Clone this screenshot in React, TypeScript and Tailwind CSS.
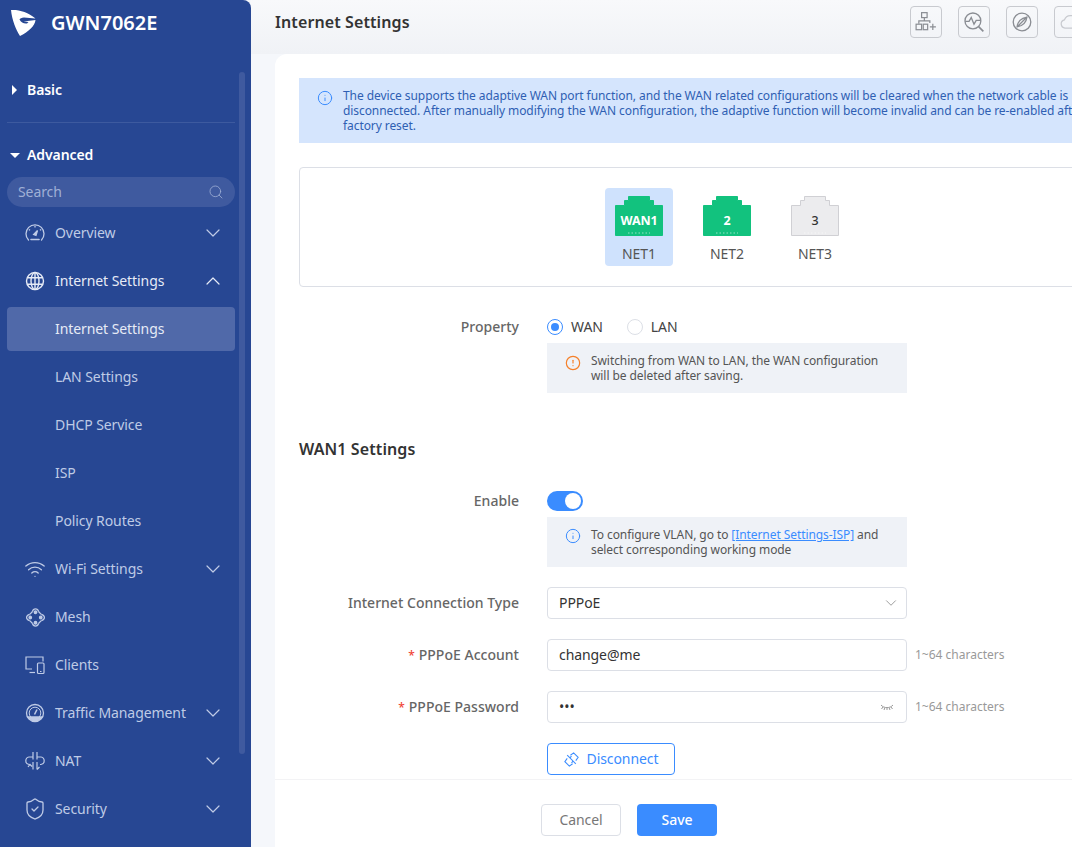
import type { ReactNode } from 'react';
import { ChevronDown, ChevronUp, Info, Search, ShieldCheck, Wifi, CircleAlert } from 'lucide-react';

function Logo() {
  return (
    <svg width="28" height="28" viewBox="0 0 28 28" className="shrink-0">
      <path d="M1 1 C9 0.5 18 3 25.5 9.5 L14 8.5 C11.5 8.5 10 9.5 9.5 10.5 C11 13.5 14 15 17 14.5 L18.5 13 L13.5 12.5 L25.5 11 C25 17 18 23 10 27 C6 21 2 11 1 1 Z" fill="#fff" />
    </svg>
  );
}

function OverviewIcon() {
  return (
    <svg width="20" height="20" viewBox="0 0 20 20" fill="none" stroke="currentColor" strokeWidth="1.3" className="shrink-0">
      <path d="M3.5 17 A9 9 0 1 1 16.5 17" strokeLinecap="round" />
      <path d="M10 3 v1.5 M3.8 6.5 l1.3 .8 M16.2 6.5 l-1.3 .8" />
      <path d="M8.7 11.5 L12.5 7.5 L11 12.3 Z" fill="currentColor" />
      <path d="M6 16.5 h8" strokeWidth="1.6" strokeLinecap="round" />
    </svg>
  );
}

function GlobeIcon() {
  return (
    <svg width="20" height="20" viewBox="0 0 20 20" fill="none" stroke="currentColor" strokeWidth="1.4" className="shrink-0">
      <circle cx="10" cy="10" r="8.5" />
      <ellipse cx="10" cy="10" rx="4" ry="8.5" />
      <path d="M10 1.5 V18.5 M2.2 6.8 H17.8 M2.2 13.2 H17.8" />
    </svg>
  );
}

function MeshIcon() {
  return (
    <svg width="21" height="21" viewBox="0 0 20 20" fill="none" stroke="currentColor" strokeWidth="1.2" className="shrink-0">
      <path d="M7 4.5 C8 1 12 1 13 4.5 M15.5 7 C19.5 8 19.5 12 15.5 13 M13 15.5 C12 19 8 19 7 15.5 M4.5 13 C.5 12 .5 8 4.5 7" />
      <path d="M7 4.5 L4.5 7 M13 4.5 L15.5 7 M15.5 13 L13 15.5 M7 15.5 L4.5 13" />
      <circle cx="10" cy="5" r="1.2" fill="currentColor" />
      <circle cx="15" cy="10" r="1.2" fill="currentColor" />
      <circle cx="10" cy="15" r="1.2" fill="currentColor" />
      <circle cx="5" cy="10" r="1.2" fill="currentColor" />
    </svg>
  );
}

function ClientsIcon() {
  return (
    <svg width="20" height="20" viewBox="0 0 20 20" fill="none" stroke="currentColor" strokeWidth="1.2" className="shrink-0">
      <path d="M7 14 H1 V2 H18 V6.5" />
      <path d="M4.5 17.5 H10" />
      <rect x="12.5" y="8" width="6.5" height="10.5" rx="1" />
      <path d="M15 16.5 h1.5" />
    </svg>
  );
}

function TrafficIcon() {
  return (
    <svg width="20" height="20" viewBox="0 0 20 20" fill="none" stroke="currentColor" strokeWidth="1.3" className="shrink-0">
      <circle cx="10" cy="10" r="8.5" />
      <circle cx="10" cy="10" r="5.8" strokeWidth="1" />
      <path d="M3 14 H17 A8.5 8.5 0 0 1 3 14 Z" fill="currentColor" />
      <path d="M9.5 11.5 L12 6.5" strokeWidth="1.5" />
    </svg>
  );
}

function NatIcon() {
  return (
    <svg width="20" height="20" viewBox="0 0 20 20" fill="none" stroke="currentColor" strokeWidth="1.2" className="shrink-0">
      <path d="M8 6 H4 A3.8 3.8 0 0 0 4 13.5 H5" />
      <path d="M12 6 H16 A3.8 3.8 0 0 1 16 13.5 H15" />
      <path d="M8 1 V8.5 M12 1 V8.5" />
      <path d="M8 11 V18.5 M12 11 V18.5 M12 18.5 L14.5 16 M3 16 L5 13.5 L7 15.5" />
    </svg>
  );
}

function Port({ label, name, color, edge, textColor, weight, selected }: { label: string; name: string; color: string; edge: string; textColor: string; weight: number; selected?: boolean }) {
  return (
    <div className={`flex h-[78px] w-[68px] flex-col items-center rounded pt-2 ${selected ? 'bg-[#cfe2fd]' : ''}`}>
      <svg width="48" height="40" viewBox="0 0 48 40">
        <path d="M.5 9.5 H9.5 V4.5 H13.5 V.5 H34.5 V4.5 H38.5 V9.5 H47.5 V39.5 H.5 Z" fill={color} stroke={edge} />
        <path d="M13 37 H35" stroke="#fff" strokeOpacity="0.55" strokeDasharray="1.5 2" />
        <text x="24" y="29" textAnchor="middle" fontSize="12.5" fontWeight={weight} fill={textColor} fontFamily="'Noto Sans', sans-serif">{label}</text>
      </svg>
      <span className="mt-2 text-sm leading-5 text-[#555]">{name}</span>
    </div>
  );
}

function Row({ label, required, children, className }: { label: string; required?: boolean; children: ReactNode; className?: string }) {
  return (
    <div className={`flex items-center ${className ?? ''}`}>
      <div className="w-[220px] shrink-0 text-right text-sm font-medium tracking-[0.02px] text-[#666]">
        {required && <span className="mr-1 text-xs text-[#f04438]">*</span>}
        {label}
      </div>
      <div className="ml-7 flex items-center">{children}</div>
    </div>
  );
}

function Note({ icon, children }: { icon: ReactNode; children: ReactNode }) {
  return (
    <div className="ml-[248px] flex h-[50px] w-[360px] items-start gap-2.5 bg-[#eff2f7] pl-[18px] pt-2.5 text-xs leading-[15px] text-[#555]">
      {icon}
      <div>{children}</div>
    </div>
  );
}

const navItems: { label: string; icon: ReactNode; chevron?: 'up' | 'down'; active?: boolean; sub?: boolean; selected?: boolean }[] = [
  { label: 'Overview', icon: <OverviewIcon />, chevron: 'down' },
  { label: 'Internet Settings', icon: <GlobeIcon />, chevron: 'up', active: true },
  { label: 'Internet Settings', icon: null, sub: true, selected: true },
  { label: 'LAN Settings', icon: null, sub: true },
  { label: 'DHCP Service', icon: null, sub: true },
  { label: 'ISP', icon: null, sub: true },
  { label: 'Policy Routes', icon: null, sub: true },
  { label: 'Wi-Fi Settings', icon: <Wifi size={22} strokeWidth={1.4} className="shrink-0" />, chevron: 'down' },
  { label: 'Mesh', icon: <MeshIcon /> },
  { label: 'Clients', icon: <ClientsIcon /> },
  { label: 'Traffic Management', icon: <TrafficIcon />, chevron: 'down' },
  { label: 'NAT', icon: <NatIcon />, chevron: 'down' },
  { label: 'Security', icon: <ShieldCheck size={24} strokeWidth={1.3} className="shrink-0" />, chevron: 'down' },
];

function Sidebar() {
  return (
    <aside className="relative h-full w-[251px] shrink-0 overflow-hidden rounded-tr-lg bg-[#274793] text-sm text-[#bfcbe6]">
      <div className="flex h-[45px] items-center gap-[13px] pl-[10px]">
        <Logo />
        <span className="text-xl font-semibold tracking-normal text-white">GWN7062E</span>
      </div>
      <div className="mt-[35px] flex h-5 items-center gap-[10px] pl-3 font-semibold text-white">
        <span className="h-0 w-0 border-y-[5px] border-l-[5px] border-y-transparent border-l-white" />
        Basic
      </div>
      <div className="mx-[7px] mt-[22px] h-px w-[228px] bg-[#3d5a9f]" />
      <div className="mt-[22px] flex h-5 items-center gap-[7px] pl-[10px] font-semibold text-white">
        <span className="h-0 w-0 border-x-[5px] border-t-[5px] border-x-transparent border-t-white" />
        Advanced
      </div>
      <div className="mx-[7px] mt-3 flex h-[30px] w-[228px] items-center justify-between rounded-full bg-[#3f5a9f] pl-[11px] pr-[11px] text-[#9fb0d6]">
        Search
        <Search size={16} strokeWidth={1.2} />
      </div>
      <nav className="mt-0.5">
        {navItems.map((item, i) =>
          item.sub ? (
            <div key={i} className="flex h-12 items-center px-[7px]">
              <div className={`flex h-11 w-[228px] items-center rounded pl-[48px] ${item.selected ? 'bg-[#5069a9] text-[#e6ebf6]' : ''}`}>
                {item.label}
              </div>
            </div>
          ) : (
            <div key={i} className={`flex h-12 items-center gap-[10px] pl-[25px] pr-[26px] ${item.active ? 'text-[#e6ebf6]' : ''}`}>
              <span className="flex w-5 shrink-0 justify-center">{item.icon}</span>
              <span className="flex-1">{item.label}</span>
              {item.chevron === 'up' && <ChevronUp size={24} strokeWidth={1.2} />}
              {item.chevron === 'down' && <ChevronDown size={24} strokeWidth={1.2} />}
            </div>
          ),
        )}
      </nav>
      <div className="absolute left-[239px] top-[72px] h-[682px] w-1.5 rounded-sm bg-[#3f5a9f]" />
    </aside>
  );
}

function TopBar() {
  const box = 'flex h-8 w-8 shrink-0 items-center justify-center rounded border border-[#c8cacf] text-[#8a8d93]';
  return (
    <header className="flex h-[54px] items-start bg-linear-to-b from-[#f8f9fb] to-[#f0f2f6] pl-6">
      <h1 className="flex-1 pt-3 text-base leading-5 font-semibold tracking-[0.1px] text-[#333]">Internet Settings</h1>
      <div className="flex w-[162px] shrink-0 gap-4 pt-1.5">
        <div className={box}>
          <svg width="22" height="22" viewBox="0 0 20 20" fill="none" stroke="currentColor" strokeWidth="1.1">
            <rect x="6" y="1.5" width="5" height="4.5" />
            <path d="M8.5 6 V9 M3.5 11.5 V9 H13.5 V11" />
            <rect x="1" y="12" width="5" height="5" />
            <rect x="7.5" y="12" width="4" height="5" />
            <path d="M13.5 14.5 H19 M16.2 11.7 V17.3" />
          </svg>
        </div>
        <div className={box}>
          <svg width="22" height="22" viewBox="0 0 20 20" fill="none" stroke="currentColor" strokeWidth="1.2">
            <circle cx="9" cy="9" r="7.2" />
            <path d="M2 9.5 H5.5 L7.5 6 L10 12 L12 8.5 H16" />
            <path d="M14.2 14.2 L18.5 18.5" strokeWidth="1.5" />
          </svg>
        </div>
        <div className={box}>
          <svg width="22" height="22" viewBox="0 0 20 20" fill="none" stroke="currentColor" strokeWidth="1.2">
            <circle cx="10" cy="10" r="8" />
            <path d="M14.5 5.5 C14 10 11 13.5 5.5 14.5 C6 10 9 6.5 14.5 5.5 Z M5.5 14.5 L14.5 5.5" />
          </svg>
        </div>
        <div className={box}>
          <svg width="22" height="22" viewBox="0 0 20 20" fill="none" stroke="currentColor" strokeWidth="1.1" className="text-[#c8cacf]">
            <path d="M5.5 15.5 A3.8 3.8 0 0 1 5 8 A5.5 5.5 0 0 1 15.5 8 A3.8 3.8 0 0 1 15 15.5 Z" />
          </svg>
        </div>
      </div>
    </header>
  );
}

export default function App() {
  const input = 'flex h-8 w-[360px] items-center justify-between rounded border border-[#dcdfe6] bg-white pl-[11px] pr-[12px] text-sm text-[#333]';
  const hint = 'ml-2 text-xs tracking-normal whitespace-nowrap text-[#999]';
  return (
    <div className="flex h-[847px] w-[1072px] overflow-hidden bg-[#f5f7fb] tracking-[-0.08px] [font-family:'Noto_Sans',sans-serif]">
      <Sidebar />
      <main className="min-w-0 flex-1 overflow-hidden">
        <TopBar />
        <div className="ml-6 flex h-[793px] w-[900px] flex-col rounded-t-xl bg-white">
          <div className="min-h-0 flex-1 overflow-hidden px-6 pt-6">
            <div className="flex h-[65px] items-start gap-2.5 bg-[#d5e5fd] pl-[18px] pt-2.5 text-xs leading-[15px] whitespace-nowrap text-[#2f5fb3]">
              <Info size={16} strokeWidth={1.5} className="mt-0.5 shrink-0 text-[#3a8cff]" />
              <div>
                The device supports the adaptive WAN port function, and the WAN related configurations will be cleared when the network cable is
                <br />
                disconnected. After manually modifying the WAN configuration, the adaptive function will become invalid and can be re-enabled after a
                <br />
                factory reset.
              </div>
            </div>

            <div className="mt-6 flex h-[120px] items-center rounded border border-[#dcdfe6] pl-[305px]">
              <div className="flex gap-5">
                <Port label="WAN1" name="NET1" color="#12c27e" edge="#12c27e" textColor="#fff" weight={700} selected />
                <Port label="2" name="NET2" color="#12c27e" edge="#12c27e" textColor="#fff" weight={700} />
                <Port label="3" name="NET3" color="#ececee" edge="#d0d0d4" textColor="#333" weight={500} />
              </div>
            </div>

            <Row label="Property" className="mt-6 h-8">
              <span className="flex h-4 w-4 items-center justify-center rounded-full border border-[#3a8cff]">
                <span className="h-2 w-2 rounded-full bg-[#3a8cff]" />
              </span>
              <span className="ml-2 text-sm text-[#444]">WAN</span>
              <span className="ml-6 h-4 w-4 rounded-full border border-[#dcdfe6]" />
              <span className="ml-2 text-sm text-[#444]">LAN</span>
            </Row>
            <Note icon={<CircleAlert size={16} strokeWidth={1.8} className="mt-0.5 shrink-0 text-[#f5802a]" />}>
              Switching from WAN to LAN, the WAN configuration
              <br />
              will be deleted after saving.
            </Note>

            <h2 className="mt-11 text-base leading-6 font-semibold tracking-[0.1px] text-[#333]">WAN1 Settings</h2>

            <Row label="Enable" className="mt-6 h-8">
              <span className="flex h-5 w-9 items-center justify-end rounded-full bg-[#3a8cff] pr-0.5">
                <span className="h-4 w-4 rounded-full bg-white" />
              </span>
            </Row>
            <Note icon={<Info size={16} strokeWidth={1.5} className="mt-px shrink-0 text-[#3a8cff]" />}>
              To configure VLAN, go to <span className="text-[#3a8cff] underline">[Internet Settings-ISP]</span> and
              <br />
              select corresponding working mode
            </Note>

            <Row label="Internet Connection Type" className="mt-5">
              <div className={input}>
                PPPoE
                <ChevronDown size={18} strokeWidth={1.1} className="-mr-[6px] text-[#888]" />
              </div>
            </Row>
            <Row label="PPPoE Account" required className="mt-5">
              <div className={input}>change@me</div>
              <span className={hint}>1~64 characters</span>
            </Row>
            <Row label="PPPoE Password" required className="mt-5">
              <div className={input}>
                <span className="tracking-normal">•••</span>
                <svg width="14" height="14" viewBox="0 0 14 14" fill="none" stroke="#999" strokeWidth="1">
                  <path d="M1 5 C4 8.5 10 8.5 13 5 M3 7 L1.5 9 M7 8 V10 M11 7 L12.5 9 M4.8 8 L4 10 M9.2 8 L10 10" />
                </svg>
              </div>
              <span className={hint}>1~64 characters</span>
            </Row>
            <div className="mt-5 ml-[248px] flex h-8 w-32 items-center justify-center gap-2 rounded border border-[#3a8cff] text-sm text-[#3a8cff]">
              <svg width="15" height="15" viewBox="0 0 14 14" fill="none" stroke="currentColor" strokeWidth="1">
                <path d="M6 3 L9 .8 L13.2 5 L11 8 M8 11 L5 13.2 L.8 9 L3 6" />
                <path d="M5.5 5.5 L7 3.8 M8.5 8.5 L7 10.2" />
                <path d="M3 3 L11 11" />
              </svg>
              Disconnect
            </div>
          </div>
          <footer className="flex h-[68px] shrink-0 items-start gap-4 border-t border-[#f3f3f5] pl-[266px] pt-6">
            <div className="flex h-8 w-20 items-center justify-center rounded border border-[#dcdfe6] text-sm text-[#777]">Cancel</div>
            <div className="flex h-8 w-20 items-center justify-center rounded bg-[#3a8cff] text-sm font-medium text-white">Save</div>
          </footer>
        </div>
      </main>
    </div>
  );
}
